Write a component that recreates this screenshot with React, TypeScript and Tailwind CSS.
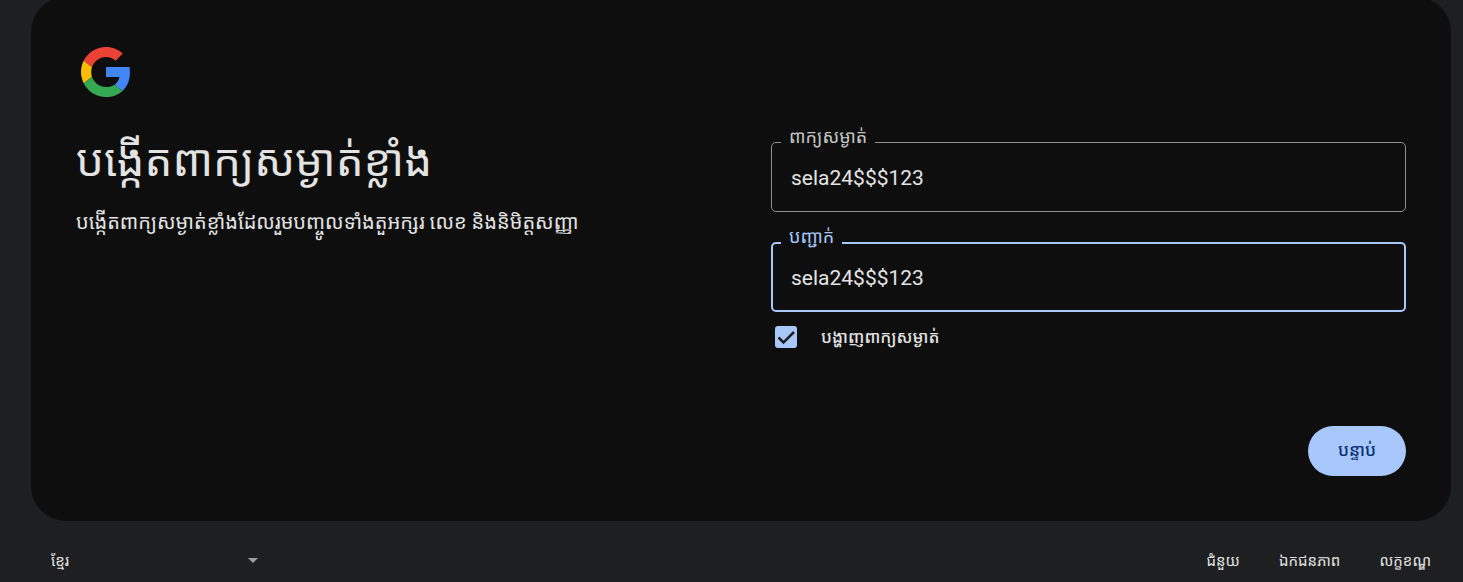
import { useState } from 'react';

function GoogleMark() {
  return (
    <svg viewBox="0 0 48 48" className="ml-[5px] block size-[50px]" role="img" aria-label="Google">
      <path fill="#EA4335" d="M24 9.5c3.54 0 6.71 1.22 9.21 3.6l6.85-6.85C35.9 2.38 30.47 0 24 0 14.62 0 6.51 5.38 2.56 13.22l7.98 6.19C12.43 13.72 17.74 9.5 24 9.5z" />
      <path fill="#4285F4" d="M46.98 24.55c0-1.88-.15-3.69-.38-5.35H24v9.6h12.94c-.58 2.7-2.26 5.7-4.78 7.4l7.73 6c4.51-4.18 7.09-10.36 7.09-17.65z" />
      <path fill="#FBBC05" d="M10.53 28.59c-.48-1.45-.76-2.99-.76-4.59s.27-3.14.76-4.59l-7.98-6.19C.92 16.46 0 20.12 0 24c0 3.88.92 7.54 2.56 10.78l7.97-6.19z" />
      <path fill="#34A853" d="M24 48c6.48 0 11.93-2.13 15.89-5.81l-7.73-6c-2.15 1.45-4.92 2.3-8.16 2.3-6.26 0-11.57-4.22-13.47-9.91l-7.98 6.19C6.51 42.62 14.62 48 24 48z" />
    </svg>
  );
}

type FieldProps = { id: string; label: string; active?: boolean; visible: boolean };

function PasswordField({ id, label, active = false, visible }: FieldProps) {
  const [value, setValue] = useState('sela24$$$123');
  return (
    <div className="relative">
      <label
        htmlFor={id}
        className={
          active
            ? 'absolute -top-[18px] left-[10px] bg-[#0e0e0e] px-2 text-lg leading-[26px] text-[#a8c7fa]'
            : 'absolute -top-[18px] left-[10px] bg-[#0e0e0e] px-2 text-lg leading-[26px] text-[#c4c7c5]'
        }
      >
        {label}
      </label>
      <input
        id={id}
        type={visible ? 'text' : 'password'}
        value={value}
        onChange={(e) => setValue(e.target.value)}
        className={
          active
            ? 'block h-[70px] w-full rounded-[5px] border-2 border-[#a8c7fa] bg-transparent px-[18px] pt-0.5 text-[21px] text-[#e3e3e3] outline-none'
            : 'block h-[70px] w-full rounded-[5px] border border-[#8e918f] bg-transparent px-[19px] pt-0.5 text-[21px] text-[#e3e3e3] outline-none'
        }
      />
    </div>
  );
}

export default function App() {
  const [visible, setVisible] = useState(true);
  return (
    <div className="flex min-h-screen flex-col bg-[#1e1f20] pr-3 pl-[31px] font-[Roboto,'Noto_Sans_Khmer','Noto_Sans',sans-serif] text-[#e3e3e3]">
      <main className="-mt-[3px] rounded-[35px] bg-[#0e0e0e] px-[45px] pt-[50px] pb-[45px]">
        <GoogleMark />
        <div className="grid grid-cols-2 gap-[60px]">
          <div className="pt-[30px]">
            <h1 className="text-[44px] leading-[68px]">បង្កើតពាក្យសម្ងាត់ខ្លាំង</h1>
            <p className="mt-3 text-xl leading-[30px]">បង្កើតពាក្យសម្ងាត់ខ្លាំងដែលរួមបញ្ចូលទាំងតួអក្សរ លេខ និងនិមិត្តសញ្ញា</p>
          </div>
          <form className="pt-[45px]" onSubmit={(e) => e.preventDefault()}>
            <div className="flex flex-col gap-[30px]">
              <PasswordField id="password" label="ពាក្យសម្ងាត់" visible={visible} />
              <PasswordField id="confirm" label="បញ្ជាក់" active visible={visible} />
            </div>
            <label className="mt-3 flex w-fit items-center gap-6 pl-1 text-[17px] leading-[26px] font-medium">
              <span className="grid size-[22px] place-items-center">
                <input
                  type="checkbox"
                  checked={visible}
                  onChange={(e) => setVisible(e.target.checked)}
                  className="peer col-start-1 row-start-1 size-[22px] appearance-none rounded-[3px] border-2 border-[#a8c7fa] checked:bg-[#a8c7fa]"
                />
                <svg viewBox="0 0 22 22" className="pointer-events-none invisible col-start-1 row-start-1 size-[22px] peer-checked:visible" fill="none" stroke="#1e1f20" strokeWidth="2.5">
                  <path d="M3.5 11.5 8.5 16.5 19 6" />
                </svg>
              </span>
              បង្ហាញពាក្យសម្ងាត់
            </label>
            <div className="mt-[76px] flex justify-end">
              <button type="submit" className="h-[50px] rounded-full bg-[#a8c7fa] px-[30px] text-[17px] font-medium text-[#062e6f]">
                បន្ទាប់
              </button>
            </div>
          </form>
        </div>
      </main>
      <footer className="flex items-center justify-between px-5 pt-6 text-[15px] leading-8">
        <div className="relative w-[212px]">
          <select aria-label="ភាសា" className="h-8 w-full appearance-none bg-transparent pr-6 outline-none">
            <option>ខ្មែរ</option>
          </select>
          <svg viewBox="0 0 10 5" className="pointer-events-none absolute top-[13px] right-[5px] h-[5px] w-[10px]" fill="#9aa0a6">
            <path d="M0 0h10L5 5z" />
          </svg>
        </div>
        <nav className="flex gap-[39px]">
          <a href="#help">ជំនួយ</a>
          <a href="#privacy">ឯកជនភាព</a>
          <a href="#terms">លក្ខខណ្ឌ</a>
        </nav>
      </footer>
    </div>
  );
}
